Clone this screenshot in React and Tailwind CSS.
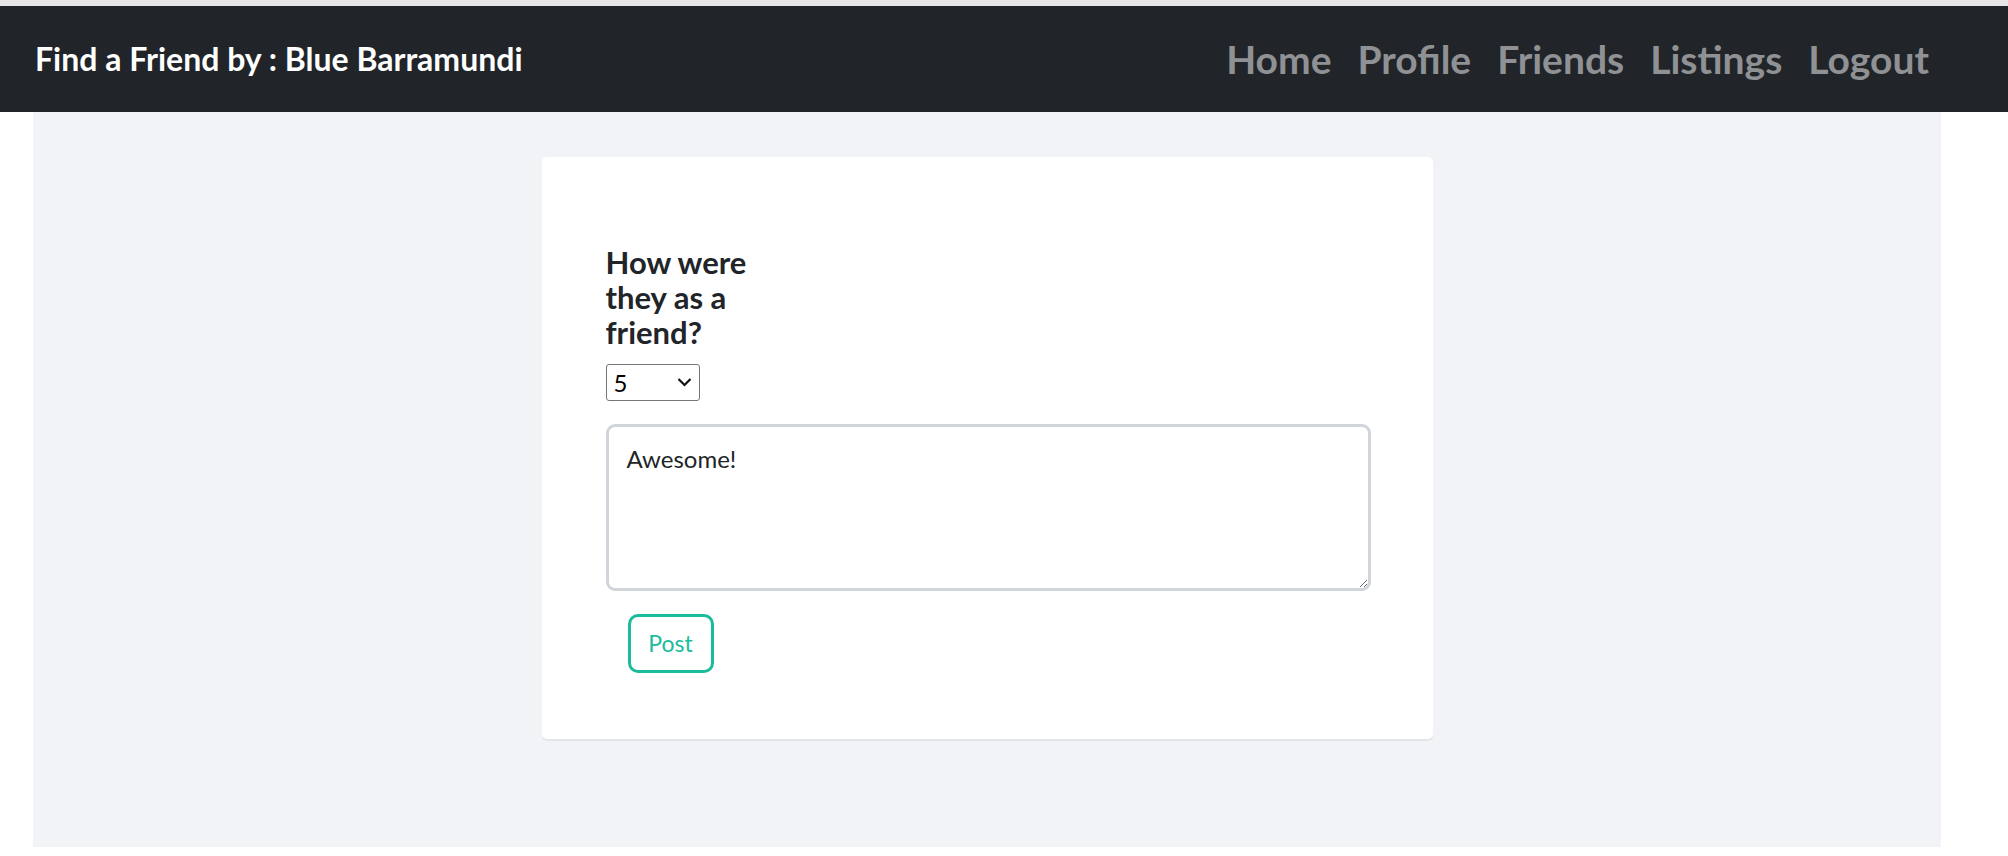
import React from "react";

export default function App() {
  const font = { fontFamily: "Lato, 'Noto Sans', sans-serif" };
  return (
    <div className="min-h-[856px] bg-white" style={font}>
      <div className="h-[6px] bg-[#e6e6e6]" />
      <nav className="flex h-[106px] items-center justify-between bg-[#212529] pl-[35px] pr-[79px]">
        <span className="text-[32px] font-bold text-white">Find a Friend by : Blue Barramundi</span>
        <div className="flex items-center gap-[26px] text-[39px] font-bold text-[#8f9194]">
          <a>Home</a>
          <a>Profile</a>
          <a>Friends</a>
          <a>Listings</a>
          <a>Logout</a>
        </div>
      </nav>
      <main className="ml-[33px] flex h-[735px] w-[1908px] justify-center bg-[#f2f3f7] pt-[45px]">
        <div className="h-[582px] w-[891px] rounded-[5px] bg-white px-[64px] pt-[88px] shadow-[0_2px_0_#e3e5ea]">
          <h2 className="text-[31px] font-bold leading-[35px] text-[#212529]">
            How were
            <br />
            they as a
            <br />
            friend?
          </h2>
          <div className="relative mt-[14px] h-[37px] w-[94px]">
            <select
              defaultValue="5"
              className="h-full w-full appearance-none rounded-[3px] border border-[#767676] bg-white pl-[7px] text-[24px] text-black"
              style={font}
            >
              <option>1</option>
              <option>2</option>
              <option>3</option>
              <option>4</option>
              <option>5</option>
            </select>
            <svg
              className="pointer-events-none absolute right-[8px] top-[13px]"
              width="15"
              height="10"
              viewBox="0 0 15 10"
              fill="none"
            >
              <path d="M1.5 2 L7.5 8 L13.5 2" stroke="#111" strokeWidth="2.2" />
            </svg>
          </div>
          <textarea
            defaultValue="Awesome!"
            className="mt-[23px] block h-[167px] w-[765px] rounded-[9px] border-[3px] border-[#d0d5dc] px-[18px] py-[14px] text-[24px] text-[#212529] outline-none"
            style={font}
          />
          <button
            className="ml-[22px] mt-[23px] h-[59px] w-[86px] rounded-[10px] border-[3px] border-[#1abc9c] text-[23px] text-[#1abc9c]"
            style={font}
          >
            Post
          </button>
        </div>
      </main>
    </div>
  );
}
